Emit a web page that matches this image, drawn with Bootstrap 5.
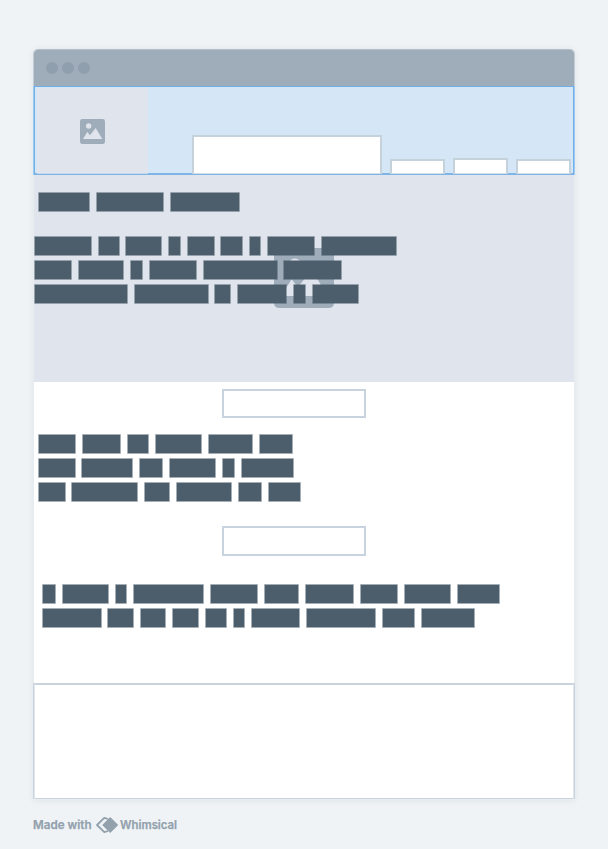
<!DOCTYPE html>
<html lang="en">
<head>
<meta charset="utf-8">
<meta name="viewport" content="width=device-width, initial-scale=1">
<title>Wireframe</title>
<link href="https://cdn.jsdelivr.net/npm/bootstrap@5.3.0/dist/css/bootstrap.min.css" rel="stylesheet">
<style>
  body { background: #eff3f6; width: 608px; height: 849px; padding: 49px 33px 0; overflow: hidden; font-family: Inter, sans-serif; }
  .wf-window { width: 540px; height: 750px; margin-left: 1px; border-radius: 5px 5px 1px 1px; box-shadow: 0 0 0 1px #e9edf0, 0 1px 7px rgba(60,80,100,.12); }
  .wf-title { height: 37px; padding: 0 0 1px 11.5px; gap: 4px; background: #9eadb9; border-top: 1px solid #b4c0c9; border-radius: 5px 5px 0 0; box-shadow: -1px 0 0 #c2ccd4, 1px 0 0 #c2ccd4; }
  .wf-dot { width: 12px; height: 12px; background: #8f9fae; }
  .wf-head { height: 89px; background: #d5e6f6; border: 1px solid #6fb0e8; border-bottom: 2px solid #7fb5e6; box-shadow: -1px 0 0 #9ccaf0, 1px 0 0 #9ccaf0; padding-left: 2px; position: relative; }
  .wf-thumb { width: 111px; height: 86px; background: #e0e5ed; border-bottom: 1px solid #c5d8ec; margin-bottom: -1px; padding-top: 2px; }
  .wf-tab { height: 15px; width: 55px; background: #fff; border: 2px solid #c5d2db; border-bottom: 1px solid #d3dde5; margin-bottom: -1px; margin-right: 8px; }
  .wf-tab-mid { height: 16px; }
  .wf-tab-lg { height: 39px; width: 190px; margin-left: 44px; }
  .wf-hero { height: 207px; background: #e0e5ed; padding: 17px 0 0; }
  .wf-hero-icon { position: absolute; left: 240px; top: 73px; }
  .wf-lines { display: flex; flex-direction: column; gap: 4px; }
  .wf-line { display: flex; gap: 5.8px; height: 20px; }
  .wf-word { flex: none; height: 20px; background: #4c5e6c; background-clip: padding-box; border: 1px solid rgba(76,94,108,.5); border-radius: 1px; }
  .wf-field { width: 144px; border: 2px solid #c7d3de; margin-left: 188px; }
  .wf-body { height: 301px; padding-top: 7px; }
  .wf-footer { height: 116px; border: 1px solid #dfe6ec; border-top: 2px solid #c8d3de; border-bottom-color: #c8d3dd; box-shadow: -1px 0 0 #c8d3dd, 1px 0 0 #c8d3dd; }
  .wf-made { height: 20px; margin-top: 16px; color: #93a1ad; font-size: 11.5px; line-height: 20px; font-weight: 600; }
</style>
</head>
<body>
<svg class="d-none"><symbol id="pic" viewBox="0 0 75 75"><path fill="#9eadb9" fill-rule="evenodd" d="M7 0H68Q75 0 75 7V68Q75 75 68 75H7Q0 75 0 68V7Q0 0 7 0ZM26 13A8 8 0 1 0 26 29A8 8 0 1 0 26 13ZM9 60H67L47 27L30 49L22 39Z"/></symbol></svg>
<main class="wf-window d-flex flex-column bg-white">
  <div class="wf-title d-flex align-items-center flex-shrink-0"><i class="wf-dot rounded-circle"></i><i class="wf-dot rounded-circle"></i><i class="wf-dot rounded-circle"></i></div>
  <header class="wf-head d-flex align-items-end flex-shrink-0">
    <div class="wf-thumb d-flex align-items-center justify-content-center"><svg width="25" height="25"><use href="#pic"/></svg></div>
    <div class="wf-tab wf-tab-lg"></div>
    <div class="wf-tab"></div>
    <div class="wf-tab wf-tab-mid"></div>
    <div class="wf-tab me-0"></div>
  </header>
  <section class="wf-hero position-relative flex-shrink-0">
    <svg class="wf-hero-icon" width="60" height="60"><use href="#pic"/></svg>
    <div class="wf-lines position-relative ps-1" data-lines="38,96,170,240"></div>
    <div class="wf-lines position-relative mt-4" data-lines="34,98,125.5,168,187.3,220.5,248.6,267.3,321.3,397;34,78,130,149,203,283.4,341.6;34,134,214.4,236.9,293,311.7,359"></div>
  </section>
  <section class="wf-body flex-shrink-0">
    <div class="wf-field" style="height:29px"></div>
    <div class="wf-lines mt-3 ps-1" data-lines="38,81.7,127,155.3,207.7,258.7,293;38,81.3,139.3,169,222.3,241,294;38,71.3,144,176,238,267.7,301"></div>
    <div class="wf-field mt-4" style="height:30px"></div>
    <div class="wf-lines ps-2" style="margin-top:28px" data-lines="42,62,114.7,133,210,264,304.7,359.7,404,457,500.4;42,107.3,139.7,171.7,204.7,233,251,305.7,382.3,421,475.4"></div>
  </section>
  <footer class="wf-footer flex-shrink-0"></footer>
</main>
<div class="wf-made d-flex align-items-center">
  <svg width="170" height="20" viewBox="0 0 170 20" fill="currentColor" stroke-linejoin="round">
    <text x="0" y="14" textLength="58.5" lengthAdjust="spacingAndGlyphs" stroke="currentColor" stroke-width=".25">Made with</text>
    <path d="M75 4L71.3 2.8 64 10l7.3 7.2 3.7-1.2" fill="none" stroke="currentColor" stroke-width="1.8"/>
    <path d="M77.2 3L84.2 10 77.2 17 70.2 10Z" stroke="currentColor" stroke-width="1.5"/>
    <text x="87" y="14" textLength="57" lengthAdjust="spacingAndGlyphs" stroke="currentColor" stroke-width=".25">Whimsical</text>
  </svg>
</div>
<script src="https://cdn.jsdelivr.net/npm/bootstrap@5.3.0/dist/js/bootstrap.bundle.min.js"></script>
<script>
  // Each line lists the left edge of every word, then the right edge of the last one.
  document.querySelectorAll('[data-lines]').forEach(function (block) {
    block.dataset.lines.split(';').forEach(function (text) {
      var edges = text.split(',').map(Number), line = document.createElement('div');
      line.className = 'wf-line';
      for (var i = 0; i < edges.length - 1; i++) {
        var word = document.createElement('span'), last = i === edges.length - 2;
        word.className = 'wf-word';
        word.style.width = (edges[i + 1] - edges[i] - (last ? 0 : 5.8)) + 'px';
        line.appendChild(word);
      }
      block.appendChild(line);
    });
  });
</script>
</body>
</html>
